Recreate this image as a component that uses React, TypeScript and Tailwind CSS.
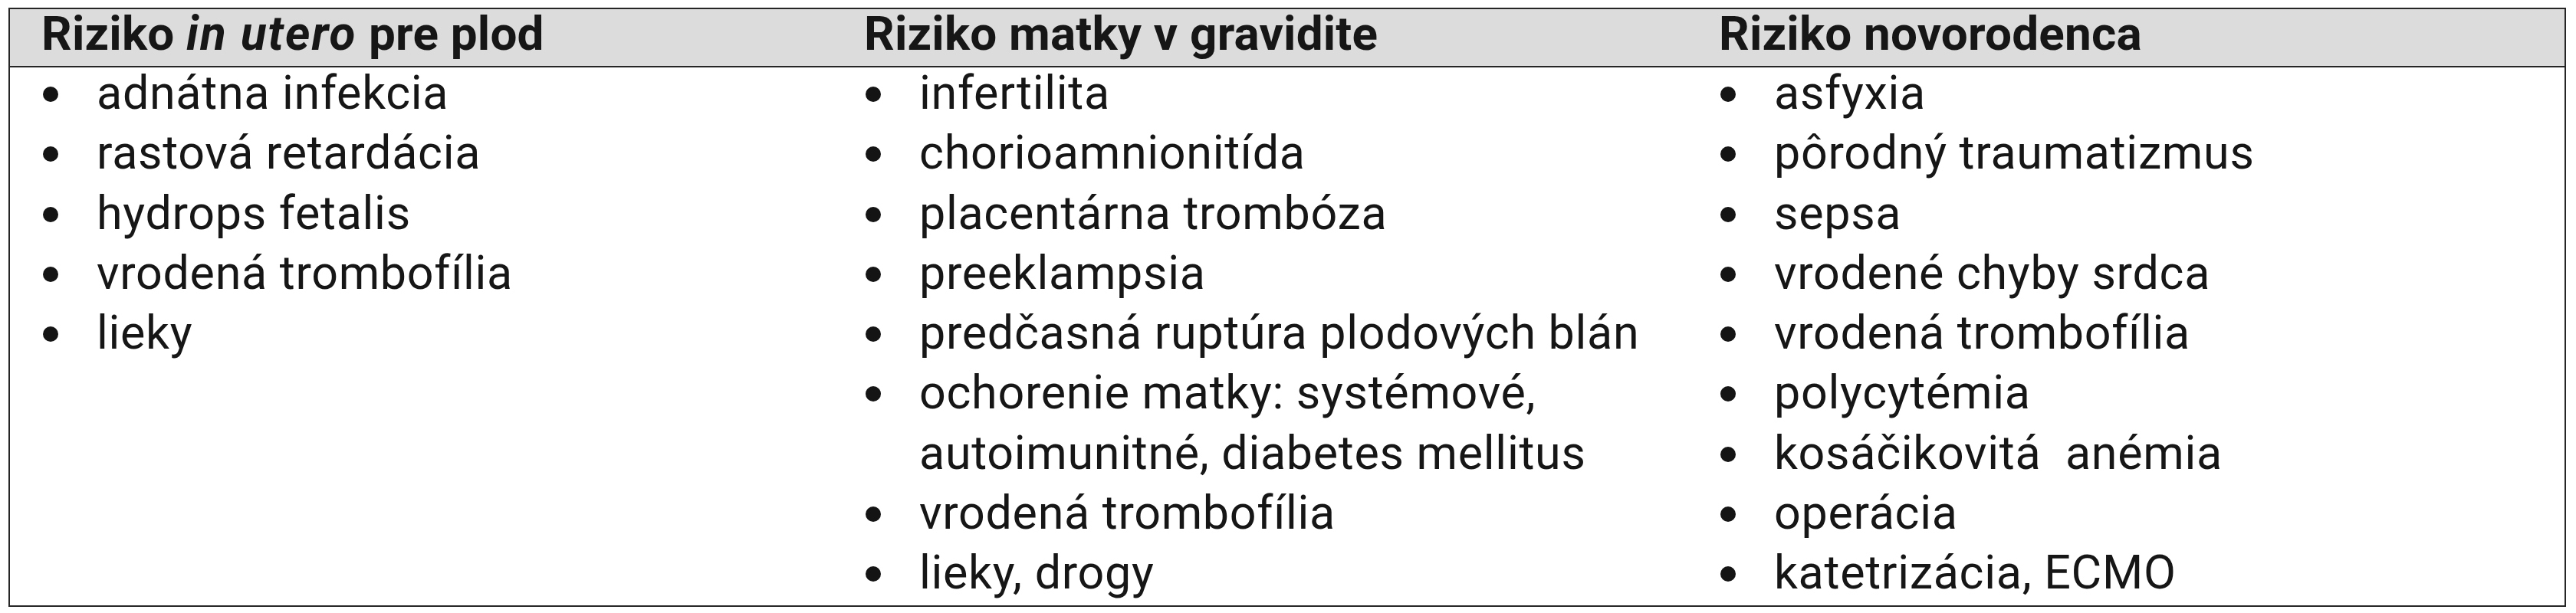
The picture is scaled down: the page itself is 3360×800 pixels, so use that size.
import type { ReactNode } from "react";

type Column = {
  title: ReactNode;
  items: ReactNode[];
};

const columns: Column[] = [
  {
    title: (
      <>
        Riziko <i className="tracking-[2px]">in utero</i> pre plod
      </>
    ),
    items: [
      "adnátna infekcia",
      "rastová retardácia",
      "hydrops fetalis",
      "vrodená trombofília",
      "lieky",
    ],
  },
  {
    title: "Riziko matky v gravidite",
    items: [
      "infertilita",
      "chorioamnionitída",
      "placentárna trombóza",
      "preeklampsia",
      "predčasná ruptúra plodových blán",
      <>
        ochorenie matky: systémové,
        <br />
        autoimunitné, diabetes mellitus
      </>,
      "vrodená trombofília",
      "lieky, drogy",
    ],
  },
  {
    title: "Riziko novorodenca",
    items: [
      "asfyxia",
      "pôrodný traumatizmus",
      "sepsa",
      "vrodené chyby srdca",
      "vrodená trombofília",
      "polycytémia",
      "kosáčikovitá\u00a0 anémia",
      "operácia",
      "katetrizácia, ECMO",
    ],
  },
];

function BulletList({ items }: { items: ReactNode[] }) {
  return (
    <ul className="flex flex-col text-[61px] leading-[78.25px] tracking-[0.7px]">
      {items.map((item, i) => (
        <li key={i} className="flex">
          <div className="w-[72px] shrink-0">
            <span className="mt-[31px] ml-[2px] block h-[20px] w-[20px] rounded-full bg-[#141414]" />
          </div>
          <span className="whitespace-nowrap">{item}</span>
        </li>
      ))}
    </ul>
  );
}

export default function App() {
  return (
    <div className="h-[800px] w-[3360px] bg-white pt-[10px] pl-[11px]">
      <div className="h-[782px] w-[3336px] border-2 border-[#262626] font-[Roboto,'Liberation_Sans',sans-serif] text-[#161616]">
        <div className="grid h-[76px] grid-cols-[1073px_1115px_1fr] border-b-2 border-[#262626] bg-[#dcdcdc] pl-[41px]">
          {columns.map((col, i) => (
            <div key={i} className="text-[62px] font-bold leading-[64px] tracking-[0.2px] whitespace-nowrap">
              {col.title}
            </div>
          ))}
        </div>
        <div className="-mt-[6px] grid grid-cols-[1073px_1115px_1fr] pl-[41px]">
          {columns.map((col, i) => (
            <BulletList key={i} items={col.items} />
          ))}
        </div>
      </div>
    </div>
  );
}
